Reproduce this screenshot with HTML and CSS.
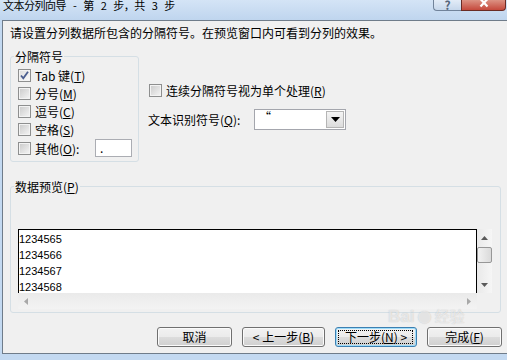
FILE: index.html
```html
<!DOCTYPE html>
<html lang="zh-CN">
<head>
    <meta charset="UTF-8">
    <title>文本分列向导 - 第 2 步，共 3 步</title>
    <link rel="stylesheet" href="styles.css">
</head>
<body>
    <div class="titlebar">
        <span class="title">文本分列向导 - 第 2 步，共 3 步</span>
        <div class="caption">
            <span class="cap-help">?</span>
            <span class="cap-close">
                <svg width="10" height="8" viewBox="0 0 10 8"><path d="M1.5 -1 L8.5 6.5 M8.5 -1 L1.5 6.5" stroke="#fff" stroke-width="2.2" fill="none"/></svg>
            </span>
        </div>
    </div>

    <div class="client">
        <p class="intro">请设置分列数据所包含的分隔符号。在预览窗口内可看到分列的效果。</p>

        <div class="options">
            <fieldset class="group delims">
                <legend>分隔符号</legend>
                <label class="row"><span class="cb checked"><svg width="11" height="11" viewBox="0 0 11 11"><path d="M2 5.5 L4.3 8.3 L9 1.8" stroke="#4a5d8f" stroke-width="1.8" fill="none"/></svg></span>Tab 键(<u>T</u>)</label>
                <label class="row"><span class="cb"></span>分号(<u>M</u>)</label>
                <label class="row"><span class="cb"></span>逗号(<u>C</u>)</label>
                <label class="row"><span class="cb"></span>空格(<u>S</u>)</label>
                <label class="row last"><span class="cb"></span>其他(<u>O</u>):<span class="other-box">.</span></label>
            </fieldset>

            <div class="side">
                <label class="row"><span class="cb"></span>连续分隔符号视为单个处理(<u>R</u>)</label>
                <div class="qualifier">
                    <span class="q-label">文本识别符号(<u>Q</u>):</span>
                    <div class="combo">
                        <span class="combo-text">“</span>
                        <span class="drop"><svg width="9" height="5" viewBox="0 0 9 5"><path d="M0 0 H9 L4.5 5 Z" fill="#000"/></svg></span>
                    </div>
                </div>
            </div>
        </div>

        <fieldset class="group preview">
            <legend>数据预览(<u>P</u>)</legend>
            <div class="grid">
                <div class="list">
                    <div>1234565</div>
                    <div>1234566</div>
                    <div>1234567</div>
                    <div>1234568</div>
                </div>
                <div class="vscroll">
                    <svg class="arr-up" width="7" height="4" viewBox="0 0 7 4"><path d="M0 4 L3.5 0 L7 4 Z" fill="#5a5a5a"/></svg>
                    <span class="thumb"></span>
                    <svg class="arr-down" width="7" height="4" viewBox="0 0 7 4"><path d="M0 0 L7 0 L3.5 4 Z" fill="#5a5a5a"/></svg>
                </div>
                <div class="hscroll">
                    <svg width="4" height="7" viewBox="0 0 4 7"><path d="M4 0 L0 3.5 L4 7 Z" fill="#a8a8a8"/></svg>
                    <svg width="4" height="7" viewBox="0 0 4 7"><path d="M0 0 L4 3.5 L0 7 Z" fill="#a8a8a8"/></svg>
                </div>
                <div class="corner"></div>
            </div>
        </fieldset>

        <div class="buttons">
            <span class="btn w75">取消</span>
            <span class="btn w83">&lt; 上一步(<u>B</u>)</span>
            <span class="btn w82 default">下一步(<u>N</u>) &gt;</span>
            <span class="btn w75">完成(<u>F</u>)</span>
        </div>

        <div class="watermark">
            <span class="wm-bai">Bai</span><span class="wm-paw">&#9679;</span><span class="wm-jy">经验</span>
        </div>
    </div>
</body>
</html>
```

FILE: styles.css
```css
body {
    margin: 0;
    width: 507px;
    height: 360px;
    overflow: hidden;
    background-color: #c3d9f1;
    font-family: "Noto Sans CJK SC", "Liberation Sans", sans-serif;
    font-size: 12px;
    color: #000;
}

u {
    text-decoration: underline;
    text-underline-offset: 1px;
}

/* title bar */
.titlebar {
    height: 20px;
    display: flex;
    align-items: flex-start;
    background: linear-gradient(#d4e4f6, #bfd5ee);
}

.title {
    padding-left: 3px;
    font-size: 11px;
    line-height: 14px;
    margin-top: -2px;
    letter-spacing: -0.5px;
    word-spacing: 5px;
}

.caption {
    margin-left: auto;
    margin-right: 1px;
    display: flex;
}

.cap-help {
    box-sizing: border-box;
    width: 28px;
    height: 11px;
    border: 1px solid #71839a;
    border-top: none;
    border-right: none;
    border-radius: 0 0 0 4px;
    background: linear-gradient(#e3ecf7, #c6d7eb);
    color: #56657a;
    font-weight: bold;
    font-size: 12px;
    line-height: 10px;
    text-align: center;
    overflow: hidden;
}

.cap-close {
    box-sizing: border-box;
    width: 45px;
    height: 11px;
    border: 1px solid #6a2b24;
    border-top: none;
    border-radius: 0 0 4px 0;
    background: linear-gradient(#dc9283, #c5493c);
    display: flex;
    justify-content: center;
    align-items: flex-start;
}

/* client area */
.client {
    position: relative;
    box-sizing: border-box;
    height: 334px;
    margin-left: 2px;
    border: 1px solid #6f7c8a;
    border-right: none;
    background-color: #f0f0f0;
    padding: 0 5px 0 7px;
}

.intro {
    margin: 0;
    padding-top: 4px;
    line-height: 16px;
}

.options {
    display: flex;
    margin-top: 8px;
}

.group {
    box-sizing: border-box;
    margin: 0;
    min-width: 0;
    border: 1px solid #d5dfe5;
    border-radius: 3px;
}

.group legend {
    padding: 0 1px;
    margin-left: -4px;
    line-height: 15px;
}

.delims {
    width: 129px;
    padding: 2px 6px 4px 7px;
}

.row {
    display: flex;
    align-items: center;
    height: 18px;
    white-space: nowrap;
}

.row.last {
    margin-top: 1px;
}

.cb {
    box-sizing: border-box;
    width: 13px;
    height: 13px;
    flex: none;
    margin-right: 4px;
    border: 1px solid #8e8f8f;
    background: linear-gradient(135deg, #c9c9c9, #f6f6f6);
    box-shadow: inset 0 0 0 1px #f3f3f3;
    display: flex;
}

.cb.checked {
    background: linear-gradient(135deg, #dcdcdc, #fbfbfb);
}

.other-box {
    box-sizing: border-box;
    margin-left: auto;
    width: 37px;
    height: 18px;
    border: 1px solid #abadb3;
    background-color: #fff;
    padding-left: 4px;
    line-height: 16px;
}

.side {
    margin-left: 10px;
    padding-top: 32px;
}

.qualifier {
    display: flex;
    align-items: center;
    height: 21px;
    margin-top: 10px;
    margin-left: -1px;
}

.q-label {
    width: 106px;
    white-space: nowrap;
}

.combo {
    box-sizing: border-box;
    width: 92px;
    height: 21px;
    border: 1px solid #a4a6ad;
    background-color: #fff;
    display: flex;
    padding: 1px;
}

.combo-text {
    flex: 1;
    padding-left: 3px;
    line-height: 12px;
}

.drop {
    box-sizing: border-box;
    width: 18px;
    border: 1px solid #b5b5b5;
    background: linear-gradient(#f4f4f4, #dcdcdc);
    display: flex;
    align-items: center;
    justify-content: center;
}

/* preview */
.preview {
    width: 491px;
    margin-top: 17px;
    padding: 35px 8px 3px 7px;
}

.grid {
    display: grid;
    grid-template-columns: 459px 15px;
    grid-template-rows: 64px 16px;
}

.list {
    box-sizing: border-box;
    border: 1px solid #000;
    border-bottom: none;
    background-color: #fff;
    padding-top: 1px;
    overflow: hidden;
    font-family: "Liberation Sans", sans-serif;
    font-size: 11px;
    line-height: 16px;
}

.vscroll {
    background: linear-gradient(to right, #e9e9e9, #f6f6f6);
    display: flex;
    flex-direction: column;
    align-items: center;
    padding-top: 7px;
}

.thumb {
    box-sizing: border-box;
    width: 15px;
    height: 16px;
    margin-top: 7px;
    border: 1px solid #979797;
    border-radius: 2px;
    background: linear-gradient(to right, #f2f2f2, #dadada);
}

.arr-down {
    margin-top: 20px;
}

.hscroll {
    background: linear-gradient(#eaeaea, #f3f3f3);
    display: flex;
    justify-content: space-between;
    align-items: center;
    padding: 0 6px;
}

/* buttons */
.buttons {
    display: flex;
    justify-content: flex-end;
    gap: 10px;
    margin-top: 14px;
}

.btn {
    position: relative;
    box-sizing: border-box;
    height: 20px;
    border: 1px solid #707070;
    border-radius: 3px;
    background: linear-gradient(#f2f2f2 0%, #ebebeb 50%, #dddddd 50%, #cfcfcf 100%);
    box-shadow: inset 0 0 0 1px #fbfbfb;
    line-height: 18px;
    text-align: center;
    white-space: nowrap;
}

.w75 { width: 75px; }
.w83 { width: 83px; }
.w82 { width: 82px; }

.btn.default {
    border-color: #3c7fb1;
    box-shadow: inset 0 0 0 1px #9edcfa;
}

.btn.default::after {
    content: "";
    position: absolute;
    top: 2px;
    bottom: 2px;
    left: 2px;
    right: 3px;
    border: 1px dotted #000;
}

/* watermark */
.watermark {
    position: absolute;
    left: 385px;
    top: 286px;
    line-height: 18px;
    color: rgba(255, 255, 255, 0.6);
    text-shadow: 0 0 1px rgba(110, 110, 110, 0.4);
    white-space: nowrap;
    pointer-events: none;
}

.wm-bai {
    font-family: "Liberation Sans", sans-serif;
    font-weight: bold;
    font-size: 17px;
}

.wm-paw {
    font-size: 14px;
    margin: 0 3px;
}

.wm-jy {
    font-size: 15px;
}
```
